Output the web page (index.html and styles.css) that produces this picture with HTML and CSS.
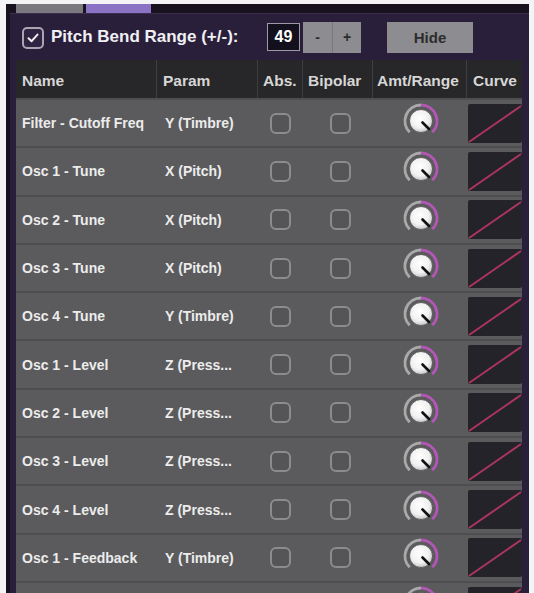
FILE: index.html
```html
<!DOCTYPE html>
<html lang="en">
<head>
    <meta charset="UTF-8">
    <meta name="viewport" content="width=device-width, initial-scale=1.0">
    <title>MPE Modulation Matrix</title>
    <link rel="stylesheet" href="styles.css">
</head>
<body>
    <div class="window">
        <div class="tabs">
            <span class="tab tab-grey"></span>
            <span class="tab tab-purple"></span>
        </div>

        <div class="panel">
            <div class="toolbar">
                <label class="pb-toggle">
                    <span class="check">
                        <svg width="14" height="14" viewBox="0 0 14 14">
                            <path d="M2.5 7.2 L5.6 10.2 L11.5 3.6" fill="none" stroke="#f2f2f2" stroke-width="2" stroke-linecap="round" stroke-linejoin="round"/>
                        </svg>
                    </span>
                    <span class="pb-label">Pitch Bend Range (+/-):</span>
                </label>
                <span class="pb-value">49</span>
                <div class="stepper">
                    <button class="step-btn">-</button>
                    <button class="step-btn">+</button>
                </div>
                <button class="hide-btn">Hide</button>
            </div>

            <div class="mod-table">
                <div class="thead">
                    <div class="th">Name</div>
                    <div class="th">Param</div>
                    <div class="th">Abs.</div>
                    <div class="th">Bipolar</div>
                    <div class="th">Amt/Range</div>
                    <div class="th">Curve</div>
                </div>
                <div class="tbody" id="rows">
                    <!-- rows are built below -->
                </div>
            </div>
        </div>
    </div>

<script>
const rows = [
    ['Filter - Cutoff Freq', 'Y (Timbre)'],
    ['Osc 1 - Tune', 'X (Pitch)'],
    ['Osc 2 - Tune', 'X (Pitch)'],
    ['Osc 3 - Tune', 'X (Pitch)'],
    ['Osc 4 - Tune', 'Y (Timbre)'],
    ['Osc 1 - Level', 'Z (Press...'],
    ['Osc 2 - Level', 'Z (Press...'],
    ['Osc 3 - Level', 'Z (Press...'],
    ['Osc 4 - Level', 'Z (Press...'],
    ['Osc 1 - Feedback', 'Y (Timbre)'],
    ['', '']
];

const knobSvg = `
<svg class="knob" width="38" height="38" viewBox="0 0 38 38">
    <defs>
        <radialGradient id="knobFace" cx="45%" cy="40%" r="65%">
            <stop offset="0%" stop-color="#ffffff"/>
            <stop offset="60%" stop-color="#f1f1f1"/>
            <stop offset="100%" stop-color="#bdbdbd"/>
        </radialGradient>
    </defs>
    <path d="M7.69 30.31 A16 16 0 0 1 19 3" fill="none" stroke="#a9a9a9" stroke-width="3"/>
    <path d="M19 3 A16 16 0 0 1 30.31 30.31" fill="none" stroke="#b455b8" stroke-width="3"/>
    <circle cx="19" cy="19" r="11.5" fill="url(#knobFace)" stroke="#4a4a4a" stroke-width="0.8"/>
    <line x1="20.5" y1="20.5" x2="27" y2="27" stroke="#111" stroke-width="2.6" stroke-linecap="round"/>
</svg>`;

const curveSvg = `
<svg class="curve" width="54" height="39" viewBox="0 0 54 39">
    <line x1="1" y1="38" x2="53" y2="2" stroke="#ad3560" stroke-width="2"/>
</svg>`;

const tbody = document.getElementById('rows');

rows.forEach(([name, param]) => {
    const row = document.createElement('div');
    row.className = 'tr';
    row.innerHTML = `
        <div class="td name">${name}</div>
        <div class="td param">${param}</div>
        <div class="td center"><span class="box"></span></div>
        <div class="td center"><span class="box"></span></div>
        <div class="td center">${knobSvg}</div>
        <div class="td curve-cell">${curveSvg}</div>`;
    tbody.appendChild(row);
});
</script>
</body>
</html>
```

FILE: styles.css
```css
body {
    margin: 0;
    padding: 0;
    background-color: #f4f3f6;
    font-family: "Liberation Sans", Arial, sans-serif;
    height: 593px;
    overflow: hidden;
}

.window {
    margin: 4px 0 0 6px;
    width: 523px;
    height: 589px;
    background-color: #17121d;
    overflow: hidden;
}

/* tab strip along the top */
.tabs {
    display: flex;
    gap: 3px;
    height: 9px;
    padding-left: 10px;
}

.tab {
    display: block;
    height: 9px;
}

.tab-grey {
    width: 67px;
    background-color: #7b797f;
}

.tab-purple {
    width: 65px;
    background-color: #8a72c4;
}

.panel {
    margin-left: 4px;
    padding: 0 7px 0 6px;
    height: 100%;
    background-color: #2a1f3b;
    border-top: 1px solid #3b2e52;
}

/* pitch bend controls */
.toolbar {
    display: flex;
    align-items: center;
    height: 46px;
    padding-left: 6px;
}

.pb-toggle {
    display: flex;
    align-items: center;
    gap: 7px;
    width: 245px;
}

.check {
    display: flex;
    align-items: center;
    justify-content: center;
    width: 18px;
    height: 18px;
    margin-top: 2px;
    border: 2px solid #a9a6b2;
    border-radius: 5px;
    background-color: #2f2442;
}

.pb-label {
    color: #f0eff3;
    font-size: 17px;
    font-weight: bold;
}

.pb-value {
    box-sizing: border-box;
    width: 33px;
    height: 28px;
    line-height: 25px;
    text-align: center;
    color: #ffffff;
    font-size: 16px;
    font-weight: bold;
    background-color: #140f1c;
    border: 1.5px solid #9d99a6;
}

.stepper {
    display: flex;
    margin-left: 3px;
}

.step-btn,
.hide-btn {
    height: 31px;
    border: none;
    padding: 0;
    background-color: #8d8c90;
    color: #2c2c2c;
    font-family: "Liberation Sans", Arial, sans-serif;
    font-weight: bold;
    cursor: pointer;
}

.step-btn {
    width: 29px;
    font-size: 14px;
}

.step-btn + .step-btn {
    border-left: 1px solid #79787c;
}

.hide-btn {
    width: 86px;
    margin-left: 26px;
    font-size: 15px;
}

/* modulation table */
.thead,
.tr {
    display: grid;
    grid-template-columns: 141px 101px 45px 70px 94px 55px;
}

.thead {
    height: 38px;
    background-color: #272629;
}

.th {
    display: flex;
    align-items: center;
    padding: 3px 0 0 6px;
    border-right: 1px solid #3e3d42;
    color: #d6d6d6;
    font-size: 15.5px;
    font-weight: bold;
    white-space: nowrap;
}

.th:nth-child(3),
.th:nth-child(4) {
    padding-left: 5px;
}

.th:nth-child(5) {
    padding-left: 4px;
}

.th:last-child {
    border-right: none;
}

.tr {
    box-sizing: border-box;
    height: 48.3px;
    background-color: #5b5b5d;
    border-top: 2px solid #4e4e51;
}

.td {
    display: flex;
    align-items: center;
    color: #ececec;
    font-size: 14px;
    font-weight: bold;
    white-space: nowrap;
}

.name {
    padding-left: 6px;
}

.param {
    padding-left: 8px;
}

.center {
    justify-content: center;
}

.box {
    display: block;
    box-sizing: border-box;
    width: 21px;
    height: 21px;
    border: 2px solid #8c8c8f;
    border-radius: 6px;
    background-color: #555557;
}

.td.center:nth-child(4) .box {
    margin-left: 4px;
}

.knob {
    display: block;
    margin: 0 0 4px 2px;
}

.curve-cell {
    padding-left: 1px;
}

.curve {
    display: block;
    background-color: #24232a;
    border-radius: 2px;
}
```
